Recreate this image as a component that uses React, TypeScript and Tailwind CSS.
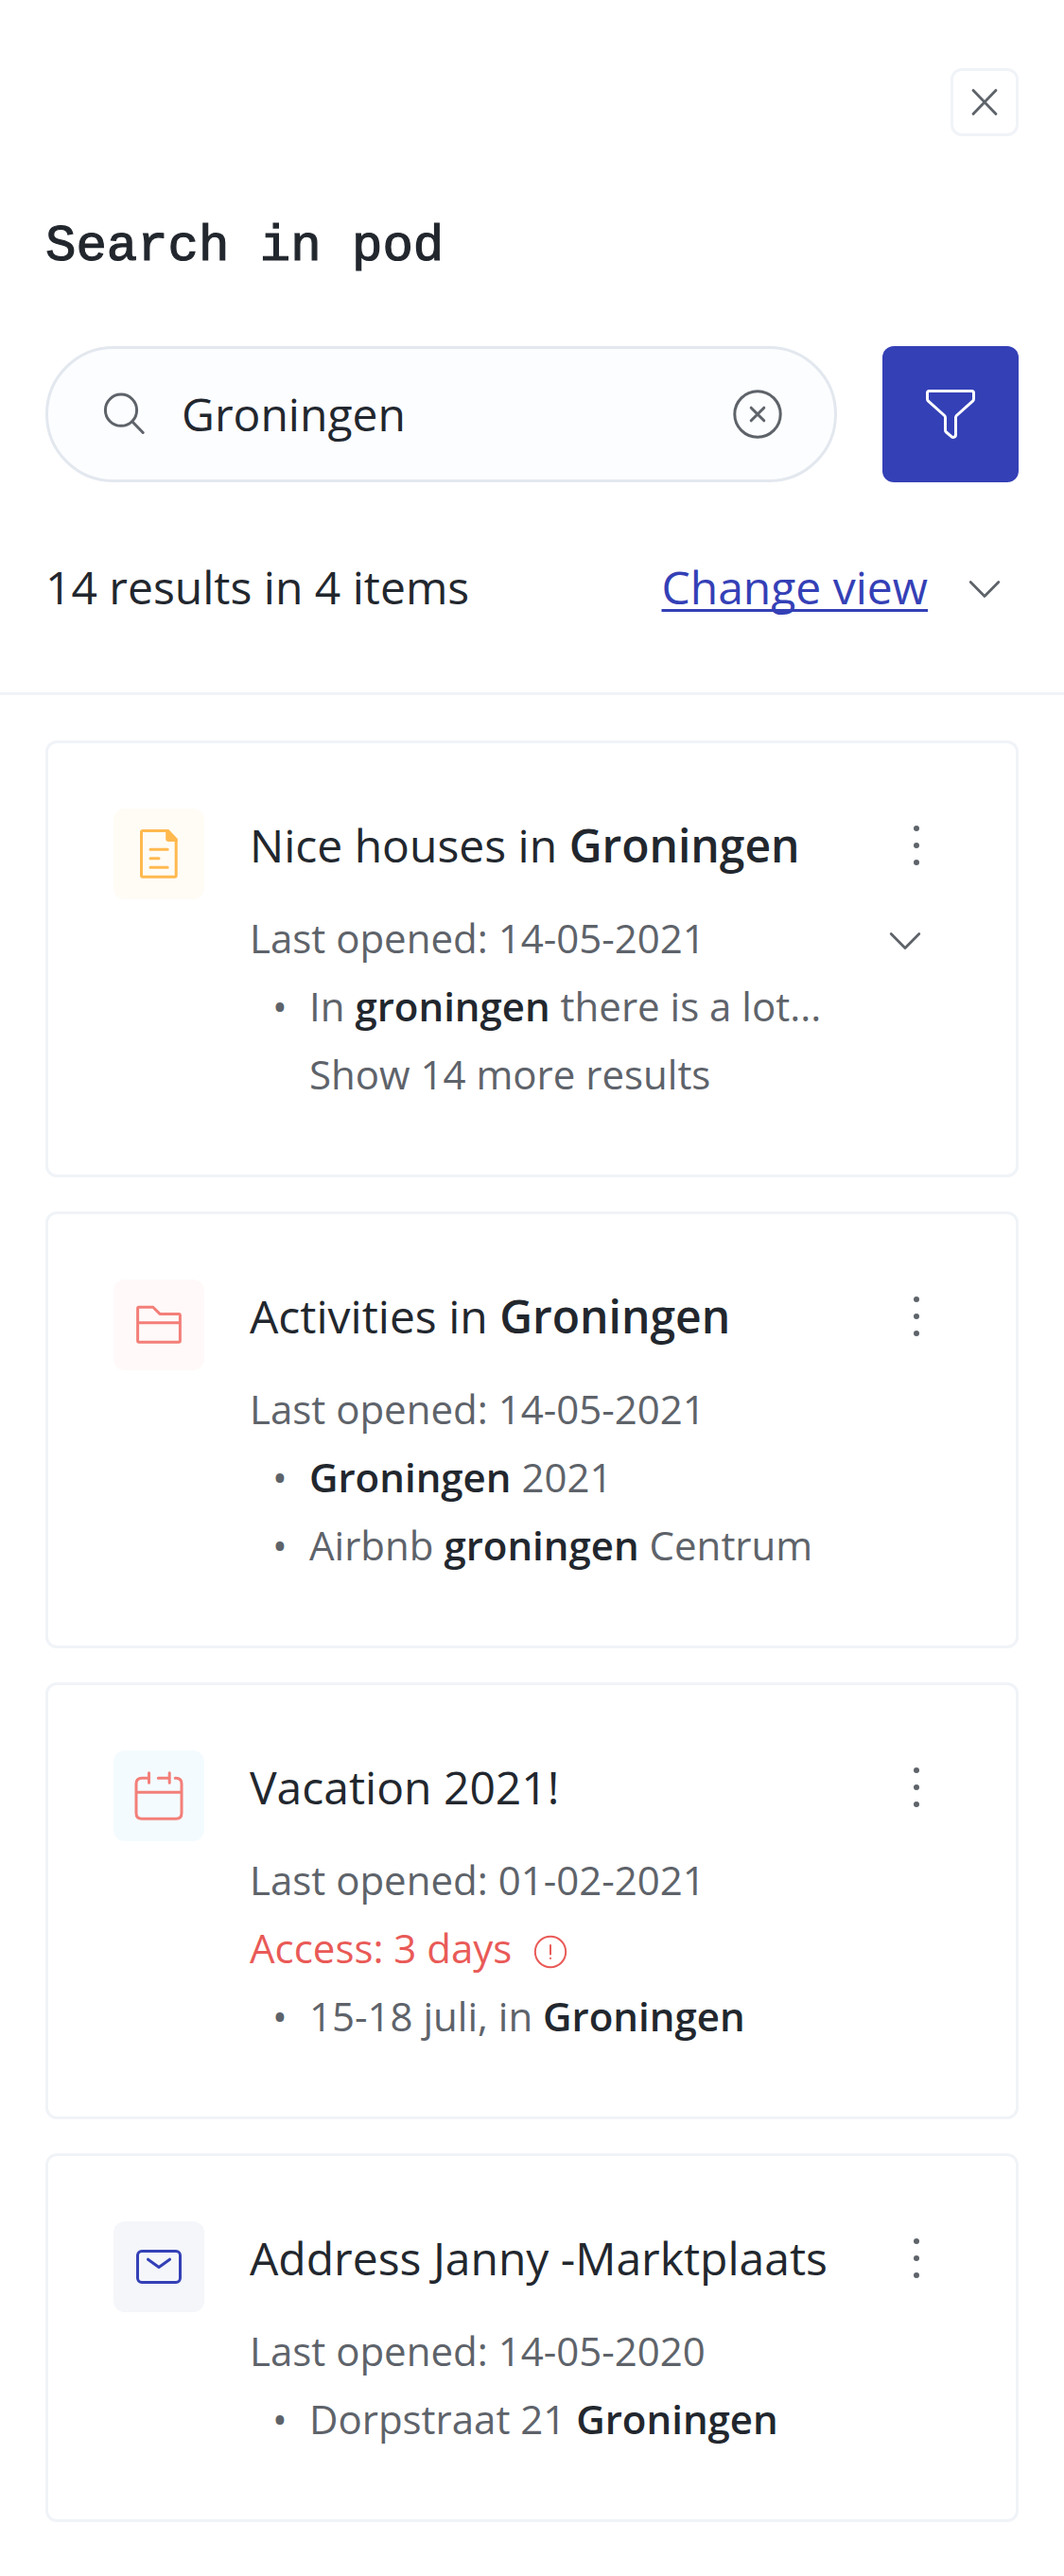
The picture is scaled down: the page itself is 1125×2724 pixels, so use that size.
import type { ReactNode } from "react";

const iconProps = {
  fill: "none",
  stroke: "currentColor",
  strokeWidth: 3,
  strokeLinecap: "round" as const,
  strokeLinejoin: "round" as const,
};

function CloseIcon() {
  return (
    <svg width="36" height="36" viewBox="0 0 36 36" {...iconProps} strokeWidth={2.8}>
      <path d="M6 5.500L30 30.500M30 5.500L6 30.500" />
    </svg>
  );
}

function SearchIcon() {
  return (
    <svg width="48" height="48" viewBox="0 0 48 48" {...iconProps}>
      <circle cx="20" cy="19.7" r="16.6" />
      <path d="M31.8 31.8L43.2 43.5" />
    </svg>
  );
}

function ClearIcon() {
  return (
    <svg width="54" height="54" viewBox="0 0 54 54" {...iconProps}>
      <circle cx="27" cy="27" r="24.2" />
      <path d="M20.2 20.2l13.6 13.6M33.8 20.2L20.2 33.8" />
    </svg>
  );
}

function FilterIcon() {
  return (
    <svg width="72" height="72" viewBox="0 0 72 72" {...iconProps}>
      <path d="M13.5 11.5h45q2 0 2 2v6.200q0 1.500-1 2.500L42.300 37.500q-.800.800-.800 2V57.500q0 2.900-2.600 2.900q-1 0-1.900-.700L31.500 55q-1-.800-1-2V39.500q0-1.200-.800-2L12.500 22.200q-1-1-1-2.500V13.500q0-2 2-2z" />
    </svg>
  );
}

function ChevronDown() {
  return (
    <svg width="36" height="24" viewBox="0 0 36 24" {...iconProps} strokeWidth={2.8}>
      <path d="M3.200 4.500L18 19.500 32.800 4.500" />
    </svg>
  );
}

function Dots() {
  return (
    <svg width="12" height="48" viewBox="0 0 12 48" fill="currentColor">
      <circle cx="6" cy="6" r="3" />
      <circle cx="6" cy="24" r="3" />
      <circle cx="6" cy="42" r="3" />
    </svg>
  );
}

function DocumentIcon() {
  return (
    <svg width="96" height="96" viewBox="0 0 96 96" {...iconProps}>
      <path d="M57.500 23.500H31q-1.500 0-1.500 1.500v45.700q0 1.500 1.500 1.500h33.700q1.500 0 1.500-1.500V32.500z" />
      <path d="M55.200 22h2.800l9.700 10.500v2.500h-9.300q-3.200 0-3.200-3.200z" fill="currentColor" stroke="none" />
      <path d="M39 43.300h18.200M39 52.700h9M39 62.300h18.200" />
    </svg>
  );
}

function FolderIcon() {
  return (
    <svg width="96" height="96" viewBox="0 0 96 96" {...iconProps}>
      <path d="M27 29.200h14.800l7.200 7.200h20q1.400 0 1.400 1.400v27q0 1.400-1.400 1.400H27q-1.400 0-1.400-1.400V30.600q0-1.400 1.400-1.400zM25.600 45.700h44.800" />
    </svg>
  );
}

function CalendarIcon() {
  return (
    <svg width="96" height="96" viewBox="0 0 96 96" {...iconProps}>
      <path d="M37.500 29.200H30q-6 0-6 6v31q0 6 6 6h36q6 0 6-6v-31q0-6-6-6h-.800M47.300 29.200h12M24 44.300h48M37.500 23.700v10.500M59.200 23.700v10.500" />
    </svg>
  );
}

function MailIcon() {
  return (
    <svg width="96" height="96" viewBox="0 0 96 96" {...iconProps}>
      <rect x="25.500" y="31.500" width="45" height="33" rx="4.500" />
      <path d="M36.500 40.200L48 48.500l11.500-8.300" />
    </svg>
  );
}

function AlertIcon() {
  return (
    <svg width="36" height="36" viewBox="0 0 36 36" {...iconProps} strokeWidth={2}>
      <circle cx="18" cy="18" r="16.200" />
      <path d="M18 11v9.500M18 24.800v.200" />
    </svg>
  );
}

function Hit({ children }: { children: ReactNode }) {
  return <strong className="font-semibold text-[#22272e]">{children}</strong>;
}

function Match({ children }: { children: ReactNode }) {
  return (
    <li className="flex">
      <span className="w-[63px] shrink-0 pl-6">•</span>
      <span className="whitespace-pre">{children}</span>
    </li>
  );
}

type CardProps = {
  icon: ReactNode;
  iconClass: string;
  title: ReactNode;
  date: string;
  expandable?: boolean;
  children: ReactNode;
};

function Card({ icon, iconClass, title, date, expandable, children }: CardProps) {
  return (
    <article className="flex rounded-xl border-3 border-[#f0f3f7] p-[69px] pb-[70px] text-[42px] leading-[72px] text-[#5e636a]">
      <div className={`size-24 shrink-0 rounded-xl ${iconClass}`}>{icon}</div>
      <div className="ml-12 flex-1">
        <div className="mb-[23px] flex h-[78px] items-start justify-between">
          <h2 className="whitespace-pre text-[48px] leading-[77px] text-[#22272e]">{title}</h2>
          <button className="mt-[15px] mr-[30px]" aria-label="More options">
            <Dots />
          </button>
        </div>
        <div className="flex h-[72px] items-center justify-between">
          <p>Last opened: {date}</p>
          {expandable && (
            <button className="mr-[30px] pt-[5px]" aria-label="Expand">
              <ChevronDown />
            </button>
          )}
        </div>
        {children}
      </div>
    </article>
  );
}

export default function App() {
  return (
    <main className="h-[2724px] w-[1125px] overflow-hidden bg-white font-['Open_Sans',sans-serif] text-[#22272e]">
      <header className="h-[735px] border-b-3 border-[#f0f3f7] px-12 pt-[72px]">
        <div className="flex justify-end">
          <button
            className="flex size-[72px] items-center justify-center rounded-xl border-3 border-[#f0f3f7] text-[#5e636a]"
            aria-label="Close"
          >
            <CloseIcon />
          </button>
        </div>
        <h1 className="mt-[81px] h-[72px] font-['Liberation_Mono',monospace] text-[54px] leading-[72px] [-webkit-text-stroke:1.2px_#22272e]">
          Search in pod
        </h1>
        <div className="mt-[69px] flex gap-12">
          <div className="flex h-36 flex-1 items-center rounded-full border-3 border-[#e3e8ef] bg-[#fcfdff] pr-[54px] pl-[57px] text-[#5e636a]">
            <SearchIcon />
            <span className="ml-9 flex-1 text-[48px] leading-[72px] text-[#22272e]">Groningen</span>
            <ClearIcon />
          </div>
          <button
            className="flex size-36 items-center justify-center rounded-xl bg-[#3440b6] text-white"
            aria-label="Filter"
          >
            <FilterIcon />
          </button>
        </div>
        <div className="mt-[75px] flex h-[72px] items-center text-[48px] leading-[72px]">
          <span className="flex-1">14 results in 4 items</span>
          <a className="text-[#3440b6] underline decoration-[2.5px] underline-offset-[5px] [text-decoration-skip-ink:none]">
            Change view
          </a>
          <span className="mr-[18px] ml-[42px] pt-[3px] text-[#5e636a]">
            <ChevronDown />
          </span>
        </div>
      </header>

      <section className="flex flex-col gap-9 px-12 pt-12">
        <Card
          icon={<DocumentIcon />}
          iconClass="bg-[#fffcf6] text-[#ffb94f]"
          title={<>Nice houses in <Hit>Groningen</Hit></>}
          date="14-05-2021"
          expandable
        >
          <ul>
            <Match>In <Hit>groningen</Hit> there is a lot...</Match>
          </ul>
          <p className="pl-[63px]">Show 14 more results</p>
        </Card>

        <Card
          icon={<FolderIcon />}
          iconClass="bg-[#fff9f9] text-[#f37f79]"
          title={<>Activities in <Hit>Groningen</Hit></>}
          date="14-05-2021"
        >
          <ul>
            <Match><Hit>Groningen</Hit> 2021</Match>
            <Match>Airbnb <Hit>groningen</Hit> Centrum</Match>
          </ul>
        </Card>

        <Card
          icon={<CalendarIcon />}
          iconClass="bg-[#f4fbff] text-[#f37f79]"
          title="Vacation 2021!"
          date="01-02-2021"
        >
          <p className="flex h-[72px] items-center gap-[23px] text-[#e95a57]">
            Access: 3 days
            <span className="pt-2">
              <AlertIcon />
            </span>
          </p>
          <ul>
            <Match>15-18 juli, in <Hit>Groningen</Hit></Match>
          </ul>
        </Card>

        <Card
          icon={<MailIcon />}
          iconClass="bg-[#f4f6fa] text-[#3440b6]"
          title="Address Janny -Marktplaats"
          date="14-05-2020"
        >
          <ul>
            <Match>Dorpstraat 21 <Hit>Groningen</Hit></Match>
          </ul>
        </Card>
      </section>
    </main>
  );
}
